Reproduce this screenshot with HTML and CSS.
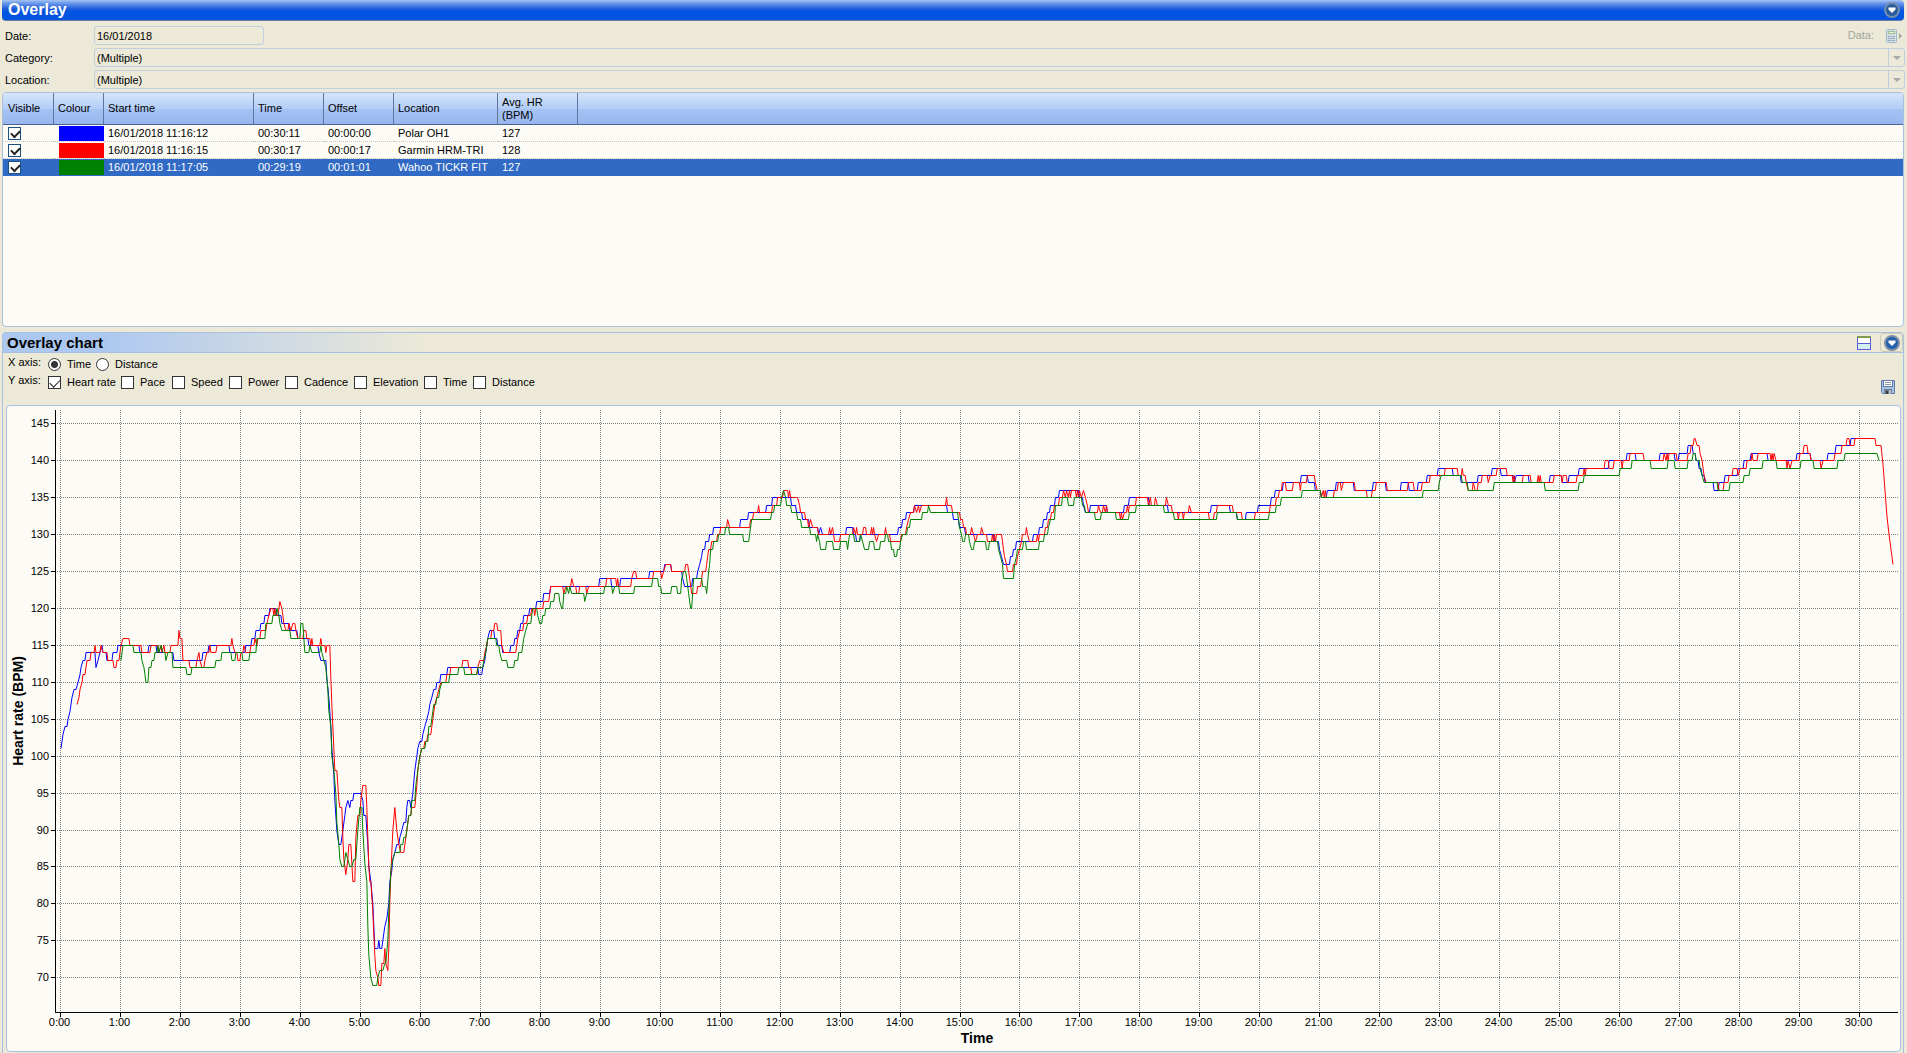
FILE: index.html
```html
<!DOCTYPE html>
<html lang="en">

<head>
    <meta charset="UTF-8">
    <title>Overlay</title>
    <link rel="stylesheet" href="styles.css">
</head>

<body>
    <div class="title-bar">
        <h1>Overlay</h1>
        <button class="menu-btn" type="button" aria-label="Overlay menu">
            <svg width="16" height="16" viewBox="0 0 16 16">
                <circle cx="8" cy="8" r="7" fill="#2a5c9c" stroke="#6f8dae" stroke-width="2"/>
                <path d="M4.500 5.500h7v2L8 11 4.500 7.500z" fill="#fff"/>
            </svg>
        </button>
    </div>

    <div class="details">
        <div class="field">
            <label for="date">Date:</label>
            <input type="text" id="date" value="16/01/2018" readonly>
            <button class="data-btn" type="button" disabled>
                Data:
                <svg width="16" height="16" viewBox="0 0 16 16">
                    <rect x="0.5" y="1.5" width="10" height="13" rx="1" fill="#d5e0e4" stroke="#9fb8c8"/>
                    <rect x="2.500" y="3.500" width="6" height="2" fill="#eef3cf" stroke="#9cc09a"/>
                    <path d="M2 8.500h7M2 10.500h7M2 12.500h7" stroke="#8ea4bc" stroke-dasharray="2 0.5"/>
                    <path d="M13 5v6l3-3z" fill="#a0a4a4"/>
                </svg>
            </button>
        </div>
        <div class="field">
            <label for="category">Category:</label>
            <div class="combo">
                <select id="category" disabled><option>(Multiple)</option></select>
                <span class="combo-arrow"></span>
            </div>
        </div>
        <div class="field">
            <label for="location">Location:</label>
            <div class="combo">
                <select id="location" disabled><option>(Multiple)</option></select>
                <span class="combo-arrow"></span>
            </div>
        </div>
    </div>

    <div class="activity-list">
        <table>
            <colgroup>
                <col class="col-visible">
                <col class="col-colour">
                <col class="col-start">
                <col class="col-time">
                <col class="col-time">
                <col class="col-location">
                <col class="col-hr">
                <col>
            </colgroup>
            <thead>
                <tr>
                    <th>Visible</th>
                    <th>Colour</th>
                    <th>Start time</th>
                    <th>Time</th>
                    <th>Offset</th>
                    <th>Location</th>
                    <th>Avg. HR<br>(BPM)</th>
                    <th></th>
                </tr>
            </thead>
            <tbody>
                <tr>
                    <td><input type="checkbox" aria-label="Show Polar OH1" checked></td>
                    <td class="swatch"><span class="blue"></span></td>
                    <td>16/01/2018 11:16:12</td>
                    <td>00:30:11</td>
                    <td>00:00:00</td>
                    <td>Polar OH1</td>
                    <td>127</td>
                    <td></td>
                </tr>
                <tr>
                    <td><input type="checkbox" aria-label="Show Garmin HRM-TRI" checked></td>
                    <td class="swatch"><span class="red"></span></td>
                    <td>16/01/2018 11:16:15</td>
                    <td>00:30:17</td>
                    <td>00:00:17</td>
                    <td>Garmin HRM-TRI</td>
                    <td>128</td>
                    <td></td>
                </tr>
                <tr class="selected">
                    <td><input type="checkbox" aria-label="Show Wahoo TICKR FIT" checked></td>
                    <td class="swatch"><span class="green"></span></td>
                    <td>16/01/2018 11:17:05</td>
                    <td>00:29:19</td>
                    <td>00:01:01</td>
                    <td>Wahoo TICKR FIT</td>
                    <td>127</td>
                    <td></td>
                </tr>
            </tbody>
        </table>
    </div>

    <div class="chart-panel">
        <div class="panel-bar">
            <h2>Overlay chart</h2>
            <button class="layout-btn" type="button" aria-label="Split view">
                <svg width="14" height="14" viewBox="0 0 14 14">
                    <rect x="0.5" y="0.5" width="13" height="13" fill="#fff" stroke="#5b5fd0"/>
                    <path d="M1 8h12v5H1z" fill="#d3f1f4"/>
                    <path d="M0 1h14" stroke="#7d9a55" stroke-width="2"/>
                    <path d="M0 7.5h14" stroke="#5b5fd0"/>
                </svg>
            </button>
            <button class="menu-btn boxed" type="button" aria-label="Chart menu">
                <svg width="16" height="16" viewBox="0 0 16 16">
                    <circle cx="8" cy="8" r="7" fill="#2460ae" stroke="#7d8ea3" stroke-width="2"/>
                    <path d="M4.500 5.500h7v2L8 11 4.500 7.500z" fill="#fff"/>
                </svg>
            </button>
        </div>

        <div class="options">
            <div class="axes">
                <div class="axis-row">
                    <span>X axis:</span>
                    <label><input type="radio" name="xaxis" checked>Time</label>
                    <label><input type="radio" name="xaxis">Distance</label>
                </div>
                <div class="axis-row y-row">
                    <span>Y axis:</span>
                    <label><input type="checkbox" checked>Heart rate</label>
                    <label><input type="checkbox">Pace</label>
                    <label><input type="checkbox">Speed</label>
                    <label><input type="checkbox">Power</label>
                    <label><input type="checkbox">Cadence</label>
                    <label><input type="checkbox">Elevation</label>
                    <label><input type="checkbox">Time</label>
                    <label><input type="checkbox">Distance</label>
                </div>
            </div>
            <button class="save-btn" type="button" aria-label="Save chart">
                <svg width="14" height="14" viewBox="0 0 14 14">
                    <path d="M0.5 0.5h13v13h-12l-1-1z" fill="#a9c3e6" stroke="#5d78a8"/>
                    <rect x="2.5" y="0.5" width="9" height="6" fill="#fff" stroke="#5d78a8"/>
                    <path d="M4 2.5h6M4 4.5h6" stroke="#8a94a8"/>
                    <rect x="3" y="9" width="8" height="5" fill="#6f7c90"/>
                    <rect x="5" y="11" width="2" height="3" fill="#3a3a3a"/>
                    <rect x="8" y="10" width="2" height="4" fill="#b9bec8"/>
                </svg>
            </button>
        </div>

        <div class="chart" id="chart"></div>
    </div>

    <script src="chart.js"></script>
</body>

</html>
```
FILE: styles.css
```css
* {
    box-sizing: border-box;
}

body {
    margin: 0;
    padding: 0 2px;
    height: 100vh;
    display: flex;
    flex-direction: column;
    background: #ece9d8;
    font: 11px/13px "Liberation Sans", Arial, sans-serif;
    color: #000;
}

button {
    margin: 0;
    padding: 0;
    border: 0;
    background: none;
    font: inherit;
    display: flex;
    align-items: center;
}

h1,
h2 {
    margin: 0;
    flex: 1;
}

.title-bar {
    height: 21px;
    margin-right: 1px;
    padding: 0 4px 0 6px;
    display: flex;
    align-items: center;
    flex-shrink: 0;
    border-radius: 0 4px 4px 4px;
    border-bottom: 1px solid #6c7ba0;
    background: linear-gradient(#a5c4f5 0, #6f9bea 3px, #1c5bdc 9px, #0053e1 12px, #0053e1);
}

.title-bar h1 {
    font-size: 16px;
    line-height: 18px;
    color: #fff;
}

/* date, category, location */
.details {
    padding: 5px 0 3px;
    display: flex;
    flex-direction: column;
    gap: 3px;
}

.field {
    height: 19px;
    display: flex;
    align-items: center;
}

.field label {
    width: 92px;
    padding: 1px 0 0 3px;
}

.field input,
.combo {
    height: 19px;
    border: 1px solid #c0cfdd;
    border-radius: 3px;
    background: #ece9d8;
}

.field input {
    width: 170px;
    padding: 0 2px;
    font: inherit;
}

.combo {
    flex: 1;
    display: flex;
}

.combo select {
    flex: 1;
    padding: 1px 2px 0;
    border: 0;
    appearance: none;
    background: none;
    font: inherit;
    color: #000;
    opacity: 1;
}

.combo-arrow {
    width: 16px;
    display: flex;
    align-items: center;
    justify-content: center;
    border-left: 1px solid #c0cfdd;
}

.combo-arrow::before {
    content: "";
    border: 4px solid transparent;
    border-top-color: #a5a9a9;
    border-bottom: 0;
}

.data-btn {
    margin-left: auto;
    margin-right: 3px;
    gap: 12px;
    color: #a6a598;
}

/* activity table */
.activity-list {
    height: 235px;
    margin-right: 1px;
    flex-shrink: 0;
    border: 1px solid #a9c1de;
    border-radius: 4px;
    background: #fcfbf6;
    overflow: hidden;
}

table {
    width: 100%;
    table-layout: fixed;
    border-collapse: separate;
    border-spacing: 0;
}

.col-visible {
    width: 51px;
}

.col-colour {
    width: 50px;
}

.col-start {
    width: 150px;
}

.col-time {
    width: 70px;
}

.col-location {
    width: 104px;
}

.col-hr {
    width: 80px;
}

th {
    height: 32px;
    padding: 0 4px;
    text-align: left;
    font-weight: normal;
    border-right: 1px solid #5f74a0;
    border-bottom: 1px solid #4d6394;
    background: linear-gradient(#d6e4fa, #b3cef6 50%, #a6c4f5 51%, #98b6ec);
}

th:first-child,
td:first-child {
    padding-left: 5px;
}

th:last-child {
    border-right: 0;
}

td {
    height: 17px;
    padding: 1px 4px 0;
    white-space: nowrap;
    border-bottom: 1px dotted #c4c4c0;
}

td input,
.axis-row input {
    appearance: none;
    width: 13px;
    height: 13px;
    margin: 0;
    flex-shrink: 0;
    display: block;
    border: 1px solid #1c5180;
    background: #fff;
}

input[type="checkbox"]:checked::before {
    content: "";
    display: block;
    width: 7px;
    height: 4px;
    margin: 2px;
    border: solid #222;
    border-width: 0 0 2px 2px;
    transform: rotate(-45deg);
}

td.swatch {
    padding: 0 0 0 5px;
}

.swatch span {
    display: block;
    height: 15px;
}

.blue {
    background: #00f;
}

.red {
    background: #f00;
}

.green {
    background: #008000;
}

.selected td {
    background: #316ac5;
    border-bottom-color: #316ac5;
    color: #fff;
}

/* chart panel */
.chart-panel {
    flex: 1;
    min-height: 0;
    margin: 5px 1px 0 0;
    display: flex;
    flex-direction: column;
    border: 1px solid #a9c1de;
    border-bottom: 0;
    border-radius: 4px 4px 0 0;
}

.panel-bar {
    height: 20px;
    padding-left: 4px;
    display: flex;
    align-items: center;
    flex-shrink: 0;
    border-bottom: 1px solid #a9c1de;
    background: linear-gradient(90deg, #adc8f0 100px, #ece9d8 420px);
}

.panel-bar h2 {
    font-size: 15px;
    line-height: 18px;
}

.boxed {
    width: 23px;
    height: 19px;
    margin-left: 9px;
    justify-content: center;
    border: 1px solid #cfcab2;
    border-radius: 3px;
}

.options {
    height: 52px;
    padding: 2px 8px 11px 5px;
    display: flex;
    align-items: flex-end;
    justify-content: space-between;
    flex-shrink: 0;
}

.axes {
    align-self: flex-start;
}

.axis-row {
    height: 18px;
    display: grid;
    grid-template-columns: 40px 48px 70px;
    align-items: center;
}

.y-row {
    grid-template-columns: 40px 73px 51px 57px 56px 69px 70px 49px 70px;
}

.axis-row span {
    align-self: start;
    padding-top: 1px;
}

.axis-row label {
    display: flex;
    align-items: center;
    gap: 6px;
}

.axis-row input {
    border-color: #333;
}

.axis-row input[type="checkbox"]:checked::before {
    width: 9px;
    height: 5px;
    margin: 2px 1px;
    border-width: 0 0 1px 1px;
}

.axis-row input[type="radio"] {
    border-radius: 50%;
}

input[type="radio"]:checked {
    background: radial-gradient(#333 0 3px, #fff 4px);
}

.chart {
    flex: 1;
    min-height: 0;
    margin: 0 2px 1px 3px;
    border: 1px solid #a9c1de;
    border-radius: 4px;
    background: #fcfbf6;
    overflow: hidden;
}

.chart svg {
    display: block;
}

.grid {
    stroke: #808080;
    stroke-dasharray: 1 1;
    shape-rendering: crispEdges;
}

.axis {
    stroke: #000;
    shape-rendering: crispEdges;
}

.series {
    fill: none;
    stroke-width: 1;
}

.x-label {
    text-anchor: middle;
}

.y-label {
    text-anchor: end;
}

.axis-title {
    font-size: 14px;
    font-weight: bold;
    text-anchor: middle;
}
```
FILE: chart.js
```javascript
// seconds:bpm, one entry for each change of value
var series = [
    {
        color: "#0000ff",
        data: "1:101 3:103 5:104 8:105 10:106 12:108 14:109 16:109 18:110 20:111 21:112 23:113 26:114 35:114 36:112 38:113 40:114 42:115 43:114 47:113 53:114 58:115 80:114 89:115 97:114 114:113 143:114 149:115 170:114 186:115 192:116 196:117 201:118 205:119 210:120 217:119 222:118 230:117 238:116 249:115 259:114 261:113 264:113 267:110.5 269:108 271:104 272:101 274:97.5 275:94 277:90 279:88 281:88 283:90 285:92 286:93 288:94 290:93 291:94 294:95 301:95 303:94 304:92 307:90 308:88 309:85 311:83 313:80 314:77 315:74 318:74 319:75 320:74 322:74 323:75 325:77 327:78 329:80 330:83 332:84.5 333:86 335:87 337:88 340:89 342:90 344:91 347:93 348:94 350:94 351:93 353:95 355:98 357:100 358:101 360:102 363:103 365:104 367:105 369:106 370:107 372:108 374:109 377:110 381:111 388:112 419:111 423:112 425:113 426:114 427:115 428:116 430:117 435:116 438:115 443:114 451:115 455:116 458:117 461:118 464:119 470:120 477:121 484:122 491:123 540:124 552:123 561:124 590:125 605:126 612:125 623:124 625:123 633:124 638:125 640:126 642:127 643:128 646:129 650:130 654:131 681:132 689:133 707:134 713:135 732:134 737:133 743:132 750:131 759:130 761:131 763:130 787:131 794:130 797:129 801:130 839:131 843:132 847:133 855:134 888:133 894:132 900:131 906:130 935:129 940:128 942:127 944:126 951:127 954:128 957:129 974:130 980:131 984:132 988:133 991:134 996:135 1000:136 1020:135 1024:134 1026:133 1031:134 1048:133 1065:134 1070:135 1090:134 1109:133 1152:134 1171:133 1178:132 1187:133 1199:134 1212:135 1216:136 1224:137 1242:138 1249:137 1256:136 1262:135 1268:136 1277:137 1295:136 1314:137 1327:136 1342:137 1350:136 1359:137 1368:138 1379:139 1394:138 1402:137 1419:138 1433:139 1442:138 1455:137 1457:138 1470:137 1491:138 1503:137 1510:138 1520:139 1550:140 1568:141 1577:140 1601:141 1616:140 1620:141 1629:142 1634:141 1637:140 1640:139 1643:138 1646:137 1655:136 1660:137 1666:138 1679:139 1685:140 1692:141 1709:140 1738:141 1752:140 1769:141 1777:142 1792:143 1811:143"
    },
    {
        color: "#ff0000",
        data: "17:107 19:108 20:109 22:110 23:111 26:112 27:113 31:114 35:115 36:114 41:115 43:114 48:113 54:112 57:113 60:114 61:115 63:116 70:115 82:114 91:115 99:114 101:115 102:114 104:115 105:114 111:115 118:115 119:117 120:116 122:116 123:113 130:112 137:113 139:114 140:113 142:112 145:113 147:114 150:115 151:114 157:115 171:115 172:116 173:115 175:114 178:113 181:114 184:115 186:114 191:115 195:116 197:115 198:116 201:117 207:118 209:119 211:120 214:119 215:120 216:119 219:120 220:121 222:120 223:119 224:118 226:117 229:118 231:117 233:118 236:117 238:116 244:117 247:116 251:115 252:116 253:115 261:116 262:115 266:114 267:115 270:115 271:110.5 272:107 274:101 275:98 277:98 278:96 279:94 280:93 282:93 283:89 284:86 286:84 288:86 289:88 291:88 293:83 295:83 296:89 298:92 300:92 301:94 303:96 306:96 307:93 308:89 309:85 310:83 311:83 313:79 315:73 316:71 318:70 319:69 321:69 322:72 325:74 326:72 328:71 329:74 330:80 331:84 333:90 335:93 337:90 339:88 341:87 344:87 346:89 347:90 349:92 352:93 355:93 357:96 358:98 360:100 362:101 365:102 368:103 371:103 373:105 375:107 377:108 379:109 381:110 387:111 391:112 403:113 409:112 412:111 418:112 420:113 425:114 427:115 428:116 432:117 435:118 438:117 441:117 442:115 444:114 457:115 458:116 460:117 464:118 468:119 472:120 475:119 476:120 484:121 490:122 491:123 504:122 506:123 512:124 514:123 517:122 520:123 527:122 529:123 547:124 557:123 558:124 559:123 572:124 574:125 577:124 594:125 602:124 604:125 606:126 612:125 626:126 629:125 630:124 632:122 638:123 642:124 643:125 647:126 648:127 649:128 652:129 658:130 661:131 668:132 670:131 691:132 694:133 698:133 699:134 700:133 713:134 718:135 724:136 729:135 730:136 731:135 738:135 740:134 741:133 746:132 749:131 751:132 753:131 759:130 770:131 771:130 773:131 774:130 775:129 781:130 794:131 796:130 797:131 798:130 804:131 807:130 812:131 813:130 814:131 815:130 817:129 819:130 825:130 826:131 827:130 831:129 842:130 847:131 849:132 851:133 855:134 857:133 859:134 860:133 862:134 886:134 887:135 888:134 893:133 901:132 904:131 907:130 912:131 914:130 916:129 918:130 922:131 924:130 928:129 933:130 934:129 935:130 936:129 937:130 943:129 944:128 945:127 947:126 948:125 954:126 958:127 960:128 962:129 963:130 966:130 967:131 968:130 970:129 978:130 979:129 980:130 986:131 989:132 992:133 995:134 1000:135 1004:136 1006:135 1007:136 1009:135 1010:136 1011:135 1012:136 1017:135 1018:136 1019:135 1020:136 1022:135 1024:136 1026:135 1028:134 1029:133 1039:134 1041:133 1044:134 1046:133 1047:134 1048:133 1061:132 1062:133 1063:132 1065:133 1068:134 1069:133 1070:134 1077:135 1089:134 1091:135 1092:134 1096:135 1098:134 1106:134 1107:135 1109:134 1113:133 1119:132 1120:133 1124:132 1125:133 1129:133 1130:134 1132:133 1150:132 1155:133 1158:134 1174:133 1183:132 1196:133 1211:134 1217:135 1220:136 1223:137 1227:136 1234:137 1241:136 1242:137 1248:138 1256:137 1258:136 1262:135 1264:136 1265:135 1266:136 1267:135 1275:136 1279:137 1282:136 1284:137 1296:136 1308:135 1313:136 1317:137 1328:136 1349:137 1355:136 1363:137 1371:138 1386:139 1399:138 1403:139 1404:138 1407:137 1409:136 1414:137 1416:136 1419:137 1423:138 1429:137 1431:138 1438:139 1448:138 1454:137 1455:138 1456:137 1464:138 1472:137 1479:138 1480:137 1481:138 1482:137 1495:138 1503:137 1504:138 1508:137 1518:138 1525:139 1526:138 1527:139 1546:140 1550:139 1555:140 1563:139 1564:140 1571:141 1585:140 1605:141 1607:140 1608:141 1609:140 1610:141 1618:140 1629:141 1632:142 1635:143 1636:143 1638:142 1641:141 1643:140 1644:139 1645:138 1647:137 1660:136 1665:137 1670:138 1674:139 1679:138 1681:139 1688:140 1693:141 1694:140 1699:141 1712:140 1713:141 1714:140 1715:141 1717:140 1728:139 1729:140 1731:139 1733:140 1741:141 1745:142 1749:141 1752:140 1762:139 1764:140 1776:141 1783:142 1788:143 1791:142 1796:143 1817:142 1822:142 1824:139.5 1826:136 1828:132.5 1830:130 1832:128 1834:126"
    },
    {
        color: "#008000",
        data: "61:113 63:115 74:114 82:113 84:112 85:111 86:110 88:110 89:112 92:113 95:114 98:115 99:114 101:115 103:114 106:113 108:114 113:112 127:111 132:112 156:113 162:114 172:113 176:114 183:113 190:114 197:116 206:118 213:119 217:120 219:119 220:118 222:117 231:116 240:116 241:118 243:118 244:116 245:114 250:115 252:114 261:115 262:114 264:113 266:112 268:109 269:106 271:104 272:100 274:98 276:95 277:91 279:88 280:86 282:85 284:85 285:86 286:87 288:86 290:85 292:85 294:86 296:86 297:88 298:90 300:93 302:93 303:90 305:85.5 307:83 308:77 309:73 311:70 313:69 317:69 318:70 320:71 323:71 325:72 326:72 328:75 329:79 331:84.5 333:86 335:87 341:88 344:89 347:90 349:92 352:94 355:94 356:96 358:98 360:100 362:101 366:102 369:104 371:104 373:106 374:107 377:108 379:108 380:109 382:110 390:111 399:112 405:111 418:112 424:113 426:114 427:115 428:116 437:115 440:114 442:113 448:112 455:113 459:114 463:115 464:116 466:117 468:118 472:119 473:120 478:119 480:118 483:119 486:120 491:121 495:122 500:121 502:120 503:120 504:122 507:123 509:122 510:123 512:122 525:121 527:122 545:123 553:122 555:123 560:122 575:123 593:124 599:123 602:122 612:123 618:122 622:124 624:125 627:124 629:122 630:121 631:120 632:120 633:122 634:124 643:123 646:123 647:122 649:125 650:126 651:128 654:129 659:130 666:131 670:130 684:129 690:130 692:132 712:133 715:134 722:135 724:136 726:135 727:134 732:133 738:132 742:131 751:130 757:129 758:130 760:129 761:128 767:129 774:128 781:129 788:128 790:130 795:129 801:130 803:129 805:128 810:129 815:128 821:129 826:130 829:129 832:128 835:127 838:128 841:129 843:130 848:131 851:132 863:133 869:134 871:133 899:132 900:131 902:130 903:129 906:130 910:129 912:128 915:129 927:128 930:129 939:128 941:127 943:126 944:124 955:126 957:127 958:128 964:129 967:128 980:129 985:130 989:131 991:132 996:134 1003:135 1009:134 1015:135 1023:134 1026:133 1036:132 1042:133 1057:132 1070:133 1077:134 1105:133 1115:132 1158:133 1178:132 1210:133 1217:134 1222:135 1243:136 1262:135 1364:136 1380:137 1382:138 1403:137 1409:136 1435:137 1486:136 1520:137 1525:138 1561:139 1573:140 1592:139 1609:140 1616:139 1629:140 1634:141 1637:140 1641:139 1643:138 1645:137 1659:136 1671:137 1685:138 1691:139 1704:140 1718:139 1742:140 1755:139 1779:140 1786:141 1818:141 1820:140"
    }
];

var chart = document.getElementById("chart");

function line(cls, x1, y1, x2, y2) {
    return '<line class="' + cls + '" x1="' + x1 + '" y1="' + y1 + '" x2="' + x2 + '" y2="' + y2 + '"/>';
}

function text(cls, x, y, str, extra) {
    return '<text class="' + cls + '" x="' + x + '" y="' + y + '" ' + (extra || "") + '>' + str + '</text>';
}

function draw() {
    var w = chart.clientWidth, h = chart.clientHeight;
    var left = 48, top = 4, right = w - 2, bottom = h - 39;
    var tMin = -5, tMax = 1839, vMin = 65.3, vMax = 146.8;

    function px(t) {
        return left + (t - tMin) / (tMax - tMin) * (right - left);
    }

    function py(v) {
        return bottom - (v - vMin) / (vMax - vMin) * (bottom - top);
    }

    var out = "";
    for (var v = 70; v <= 145; v += 5) {
        var y = Math.round(py(v)) + 0.5;
        out += line("grid", left, y, right, y);
        out += line("axis", left - 4, y, left, y);
        out += text("y-label", left - 6, y + 3, v);
    }
    for (var m = 0; m <= 30; m++) {
        var x = Math.round(px(m * 60)) + 0.5;
        out += line("grid", x, top, x, bottom);
        out += line("axis", x, bottom, x, bottom + 5);
        out += text("x-label", x - 1, bottom + 14, m + ":00");
    }
    out += line("axis", left + 0.5, top, left + 0.5, bottom + 1);
    out += line("axis", left, bottom + 0.5, right, bottom + 0.5);

    series.forEach(function(s) {
        var d = "", last = null;
        s.data.split(" ").forEach(function(item) {
            var p = item.split(":").map(Number);
            if (!last) {
                d = "M" + px(p[0]) + " " + (Math.round(py(p[1])) + 0.5);
            } else {
                // hold the value, then step to the new one
                if (p[0] - last[0] > 2) {
                    d += "L" + px(p[0] - 1) + " " + (Math.round(py(last[1])) + 0.5);
                }
                d += "L" + px(p[0]) + " " + (Math.round(py(p[1])) + 0.5);
            }
            last = p;
        });
        out += '<path class="series" stroke="' + s.color + '" d="' + d + '"/>';
    });

    var mid = Math.round((top + bottom) / 2);
    out += text("axis-title", 16, mid, "Heart rate (BPM)", 'transform="rotate(-90 16 ' + mid + ')"');
    out += text("axis-title", Math.round((left + right) / 2), bottom + 31, "Time");

    chart.innerHTML = '<svg width="' + w + '" height="' + h + '">' + out + '</svg>';
}

draw();
window.addEventListener("resize", draw);
```
